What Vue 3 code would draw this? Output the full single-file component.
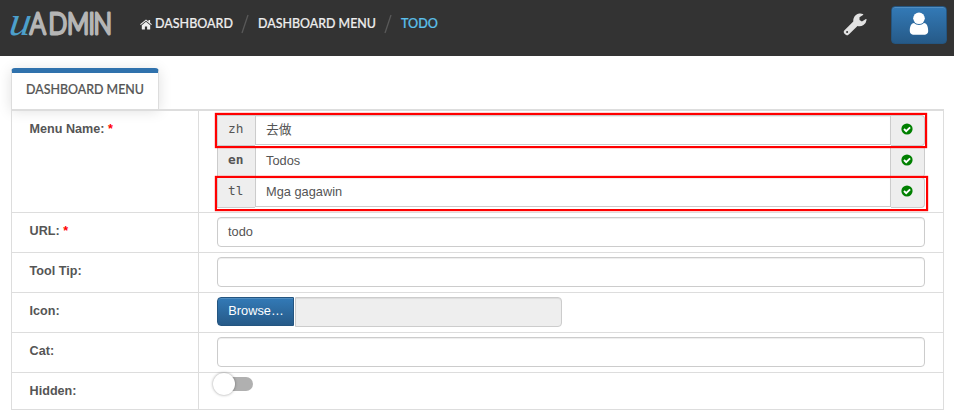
<script setup>
const languages = [
  { code: 'zh', value: '去做', marked: true },
  { code: 'en', value: 'Todos', primary: true },
  { code: 'tl', value: 'Mga gagawin', marked: true, wide: true },
]
</script>

<template>
  <div class="page">
    <header class="topbar">
      <svg class="logo" width="106" height="40" viewBox="0 0 106 40" aria-label="uADMIN">
        <text class="logo-u" transform="translate(0 26.3) skewX(-8) scale(1.28 1.22)" x="0" y="0">u</text>
        <text class="logo-name" transform="translate(0 25.2) scale(.86 1)" x="25.2 47 68.5 93.5 99.5" y="0">ADMIN</text>
      </svg>
      <nav class="crumbs">
        <a class="crumb home">
          <svg width="12" height="11" viewBox="0 0 12 11"><path d="M6 2.7 1.8 6.2V10q0 .5.5.5h2.6V7.4h2.2v3.1h2.6q.5 0 .5-.5V6.2z" /><path d="M6 .4 .1 5.3l.7.8L6 1.8l5.2 4.3.7-.8-1.8-1.5V.9H8.5v1.6z" /></svg>
          <svg class="label" width="79" height="18"><text x="0" y="13" textLength="78" lengthAdjust="spacingAndGlyphs">DASHBOARD</text></svg>
        </a>
        <svg class="slash" width="8" height="20" viewBox="0 0 8 20"><path d="M7 1 1 19" /></svg>
        <svg class="label" width="120" height="18"><text x="1" y="13" textLength="118" lengthAdjust="spacingAndGlyphs">DASHBOARD MENU</text></svg>
        <svg class="slash second" width="8" height="20" viewBox="0 0 8 20"><path d="M7 1 1 19" /></svg>
        <svg class="label current" width="38" height="18"><text x="1" y="13" textLength="37" lengthAdjust="spacingAndGlyphs">TODO</text></svg>
      </nav>
      <svg class="wrench" width="24" height="24" viewBox="0 0 24 24"><path fill-rule="evenodd" d="M14.5 12.9 5.8 21.6q-1.7 1.6-3.4 0l-.9-.9q-1.6-1.7 0-3.4l8.8-8.7A7.2 7.2 0 0 1 19.8.9q.9.4.2 1l-3.5 2.3v2.9l2.4 1.4 4-2.4q.7-.2.7.6a7.2 7.2 0 0 1-9.1 6.2zM4.1 18a1 1 0 1 0 0 2 1 1 0 0 0 0-2z" /></svg>
      <button class="user" aria-label="User">
        <svg width="20" height="24" viewBox="0 0 20 24"><path d="M5 11.1q2 2 5 2t5-2c3 .2 4.2 4 4.2 8 0 2-1.3 3.6-3.2 3.6H4c-1.9 0-3.2-1.6-3.2-3.6 0-4 1.2-7.8 4.2-8z" /><circle cx="10" cy="6.3" r="5.8" /></svg>
      </button>
    </header>

    <main>
      <div class="tab"><svg class="label" width="120" height="18"><text x="0" y="13" textLength="118" lengthAdjust="spacingAndGlyphs">DASHBOARD MENU</text></svg></div>
      <div class="form">
        <div class="row names">
          <div class="key">Menu Name: <b>*</b></div>
          <div class="value">
            <div v-for="l in languages" :key="l.code" class="group" :class="{ marked: l.marked, wide: l.wide }">
              <span class="code" :class="{ primary: l.primary }">{{ l.code }}</span>
              <span class="entry">{{ l.value }}</span>
              <span class="status"><svg width="12" height="12" viewBox="0 0 12 12"><circle cx="6" cy="6" r="5.6" /><path d="m3 6 2.2 2.2L9.1 4.3" /></svg></span>
            </div>
          </div>
        </div>
        <div class="row"><div class="key">URL: <b>*</b></div><div class="value"><div class="field">todo</div></div></div>
        <div class="row"><div class="key">Tool Tip:</div><div class="value"><div class="field"></div></div></div>
        <div class="row"><div class="key">Icon:</div><div class="value file"><button class="browse">Browse…</button><div class="filename"></div></div></div>
        <div class="row"><div class="key">Cat:</div><div class="value"><div class="field"></div></div></div>
        <div class="row last"><div class="key">Hidden:</div><div class="value"><div class="switch"><i></i></div></div></div>
      </div>
    </main>
  </div>
</template>

<style>
body { background: #fff; }
</style>

<style scoped>
.page, .page * { box-sizing: border-box; }
.page { width: 954px; height: 419px; overflow: hidden; color: #555; font: 12.8px/18px "Liberation Sans", "Noto Sans CJK SC", sans-serif; }
svg { display: block; flex: none; }
.topbar { height: 56px; background: #333; display: flex; align-items: flex-start; }
.logo { margin: 9px 0 0 8px; overflow: visible; }
.logo-u { font: italic 34px "Liberation Serif", serif; fill: #4c9fcb; }
.logo-name { font: 300 28.5px Lato, sans-serif; fill: #b5b5b5; stroke: #b5b5b5; stroke-width: 2.8; stroke-linejoin: round; }
.crumbs { display: flex; align-items: center; height: 20px; margin: 14px 0 0 26px; }
.home { display: flex; align-items: center; gap: 3px; }
.home > svg:first-child { fill: #eee; }
.label { overflow: visible; }
.label text { font: 500 13.3px Lato, sans-serif; fill: #eee; stroke: #eee; stroke-width: .2; }
.label.current text { fill: #5bc0eb; stroke: #5bc0eb; }
.slash { margin: 0 8px 0 7px; }
.slash path { stroke: #595959; stroke-width: 1.3; fill: none; }
.wrench { margin: 13px 0 0 auto; fill: #e2e2e2; }
.user { width: 56px; height: 38px; margin: 6px 7px 0 24px; padding: 0; display: flex; align-items: center; justify-content: center; background: linear-gradient(#337ab7, #265a88); border: 1px solid #245580; border-radius: 4px; box-shadow: inset 0 1px 0 rgba(255,255,255,.15); }
.user svg { fill: #fff; margin-top: -2px; }
main { padding: 12px 10px 0 11px; }
.tab { width: 148px; height: 41px; padding: 13px 0 0 14px; border: 1px solid #ddd; border-top: 5px solid #3072ad; border-bottom: 0; border-radius: 4px 4px 0 0; background: #fff; box-shadow: 0 2px 14px rgba(0,0,0,.13); }
.tab .label text { fill: #555; stroke: #555; }
.tab .label { margin-top: -5px; }
.form { position: relative; width: 933px; border: 1px solid #ddd; border-top-width: 2px; border-bottom: 0; }
.row { display: flex; height: 40px; border-bottom: 1px solid #ddd; }
.row.names { height: 102px; }
.row.last { height: 37px; }
.key { width: 187px; flex: none; padding: 9px 0 0 17.6px; border-right: 1px solid #ddd; font-size: 12.6px; font-weight: bold; }
.key b { color: #f00; }
.value { flex: 1; min-width: 0; padding: 4px 18px 0; }
.field { height: 30px; padding: 5px 10px; border: 1px solid #ccc; border-radius: 4px; box-shadow: inset 0 1px 1px rgba(0,0,0,.075); }
.group { position: relative; display: flex; width: 708px; height: 31px; }
.group.marked { z-index: 1; }
.code { width: 38px; padding: 4px 0 0 10px; border: 1px solid #ccc; border-right: 0; background: #eee; font: 12.8px/18px "DejaVu Sans Mono", monospace; }
.code.primary { font-weight: bold; }
.group:not(.marked) .code, .group:not(.marked) .status { border-top: 0; border-bottom: 0; padding-top: 5px; }
.entry { width: 636px; height: 30px; padding: 5px 10px; border: 1px solid #ccc; box-shadow: inset 0 1px 1px rgba(0,0,0,.075); }
.group:not(.marked) .entry { border-top-color: #fff; box-shadow: none; height: 31px; border-bottom: 0; }
.status { width: 34px; padding: 7px 0 0 10px; border: 1px solid #ccc; border-left: 0; background: #eee; border-radius: 0 4px 4px 0; }
.group:not(.marked) .status { padding-top: 8px; }
.status svg { fill: #008000; }
.status path { fill: none; stroke: #fff; stroke-width: 1.9; }
.marked::after { content: ""; position: absolute; inset: -2px; border: 2px solid #f00; box-shadow: 0 0 1px #f00; }
.marked.wide::after { right: -3px; top: -1px; bottom: -3px; }
.file { display: flex; }
.browse { width: 77px; height: 29px; padding: 0 0 1px 1px; color: #fff; font: inherit; background: linear-gradient(#337ab7, #265a88); border: 1px solid #245580; border-radius: 4px 0 0 4px; box-shadow: inset 0 1px 0 rgba(255,255,255,.15); }
.filename { width: 267px; height: 30px; margin-left: 1px; border: 1px solid #ccc; border-radius: 0 4px 4px 0; background: #eee; box-shadow: inset 0 1px 1px rgba(0,0,0,.075); }
.switch { width: 34px; height: 14px; margin: 0 0 0 2px; border-radius: 7px; background: #b0b0b0; }
.switch i { position: relative; left: -6px; top: -4px; display: block; width: 22px; height: 22px; border-radius: 50%; background: #fff; box-shadow: 0 0 3px rgba(0,0,0,.4); }
</style>
